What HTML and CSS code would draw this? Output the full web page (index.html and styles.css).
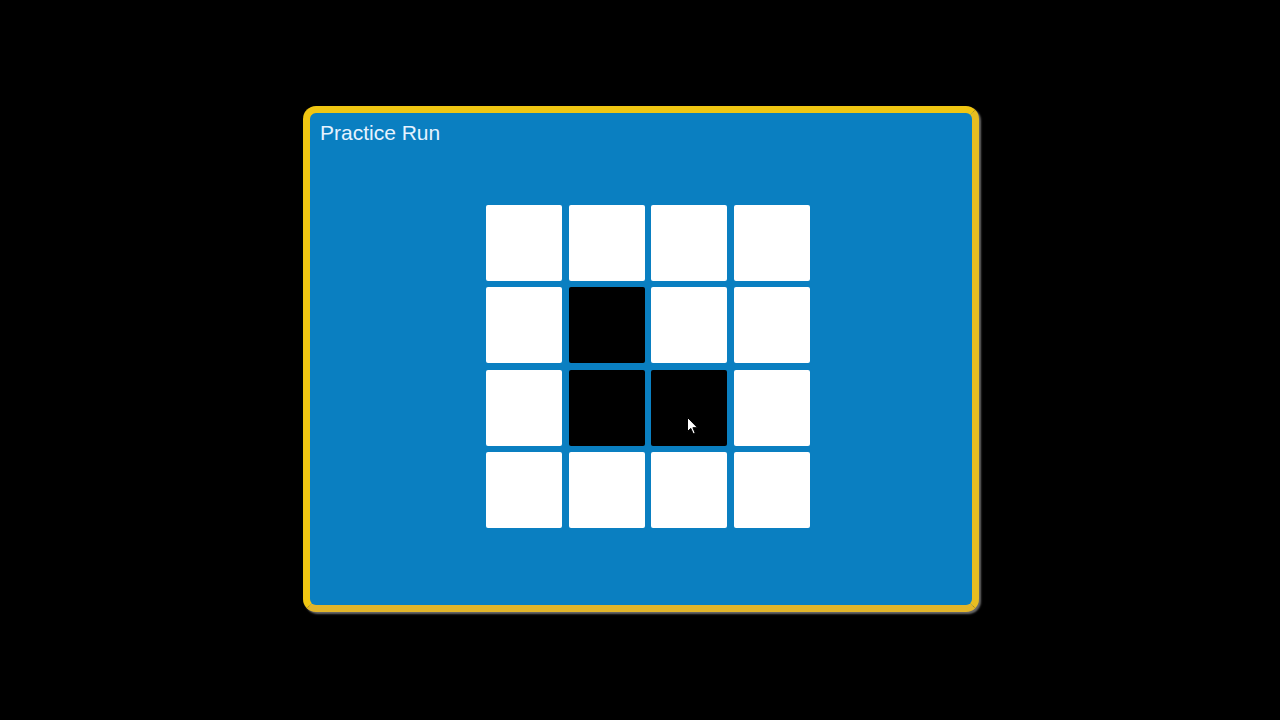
FILE: index.html
```html
<!DOCTYPE html>
<html>
<head>
<meta charset="utf-8">
<link rel="stylesheet" href="styles.css">
</head>
<body>
<div class="stage">
  <div class="panel">
    <div class="title">Practice Run</div>
    <div class="grid">
      <div class="tile"></div>
      <div class="tile"></div>
      <div class="tile"></div>
      <div class="tile"></div>
      <div class="tile"></div>
      <div class="tile on"></div>
      <div class="tile"></div>
      <div class="tile"></div>
      <div class="tile"></div>
      <div class="tile on"></div>
      <div class="tile on cursor-host">
        <svg class="cursor" width="12" height="18" viewBox="0 0 12 18">
          <path d="M0.5 0.5 L0.5 14.5 L3.8 11.4 L6.2 16.8 L8.2 15.9 L5.9 10.7 L10.5 10.7 Z" fill="#ffffff" stroke="#000000" stroke-width="1"/>
        </svg>
      </div>
      <div class="tile"></div>
      <div class="tile"></div>
      <div class="tile"></div>
      <div class="tile"></div>
      <div class="tile"></div>
    </div>
  </div>
</div>
</body>
</html>
```
FILE: styles.css
```css
html, body {
  margin: 0;
  padding: 0;
  background: #000000;
}
.stage {
  width: 1280px;
  height: 720px;
  display: flex;
  align-items: center;
  justify-content: center;
}
.panel {
  box-sizing: border-box;
  width: 676px;
  height: 506px;
  margin-left: 2px;
  margin-top: -3px;
  background: #0a7fc1;
  border: 7px solid #f0c612;
  border-bottom-color: #e2b52a;
  border-right-color: #e8bd20;
  border-radius: 13px;
  box-shadow: 2px 2px 2px rgba(150, 150, 150, 0.7);
  padding: 8px 0 0 10px;
}
.title {
  font-family: "Liberation Sans", Arial, sans-serif;
  font-size: 21px;
  line-height: 24px;
  color: #e6f3ff;
}
.grid {
  margin-top: 60px;
  margin-left: 166px;
  display: grid;
  grid-template-columns: repeat(4, 76px);
  grid-auto-rows: 76px;
  gap: 6.67px;
  width: max-content;
}
.tile {
  background: #ffffff;
  border-radius: 2px;
}
.tile.on {
  background: #000000;
}
.cursor-host {
  position: relative;
}
.cursor {
  position: absolute;
  left: 36px;
  top: 47px;
}
```
